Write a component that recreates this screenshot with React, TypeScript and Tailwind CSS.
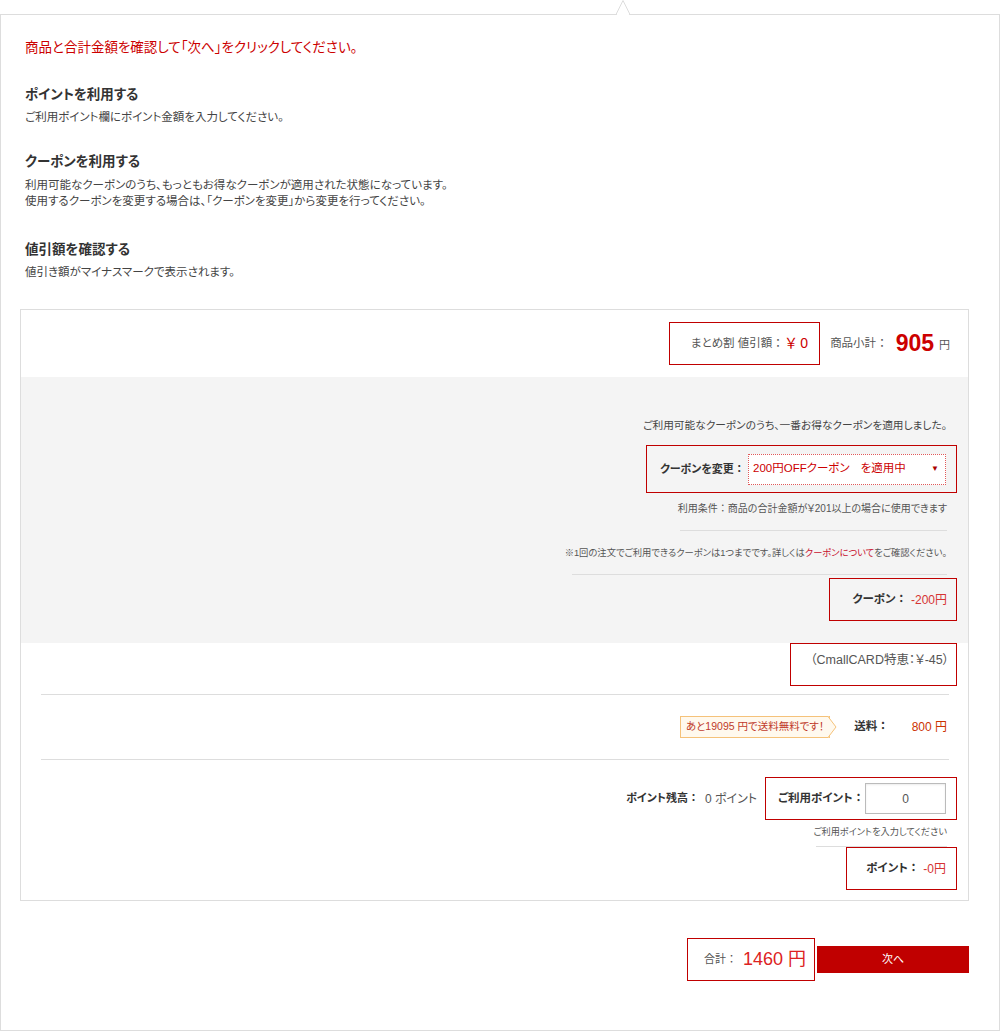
import React from "react";

// full-width colon without proportional spacing
const C = () => <span className="[font-feature-settings:normal]">：</span>;

const App = () => {
  return (
    <div className="relative w-[1000px] pt-[14px] text-[#333] [font-family:'Liberation_Sans','Noto_Sans_CJK_JP',sans-serif] [font-feature-settings:'palt']">
      {/* notch */}
      <svg
        className="absolute left-[615px] top-0 z-10"
        width="16"
        height="16"
        viewBox="0 0 16 16"
      >
        <polygon points="1.5,15.5 8,1.5 14.5,15.5" fill="#fff" />
        <polyline points="1,14.5 8,0.5 15,14.5" fill="none" stroke="#ddd" />
      </svg>

      <div className="h-[1017px] border border-[#ddd] pl-[19px]">
        {/* guide */}
        <div className="pl-[5px]">
          <p className="pt-[23px] text-[13.5px] leading-[20px] text-[#cc0000]">
            商品と合計金額を確認して「次へ」をクリックしてください。
          </p>
          <h3 className="mt-[27px] text-[13.5px] font-bold leading-[20px]">ポイントを利用する</h3>
          <p className="mt-[3px] text-[11.5px] leading-[18px] text-[#444]">
            ご利用ポイント欄にポイント金額を入力してください。
          </p>
          <h3 className="mt-[26px] text-[13.5px] font-bold leading-[20px]">クーポンを利用する</h3>
          <p className="mt-[5px] text-[11.5px] leading-[16px] text-[#444]">
            利用可能なクーポンのうち、もっともお得なクーポンが適用された状態になっています。
            <br />
            使用するクーポンを変更する場合は、「クーポンを変更」から変更を行ってください。
          </p>
          <h3 className="mt-[31px] text-[13.5px] font-bold leading-[20px]">値引額を確認する</h3>
          <p className="mt-[3px] text-[11.5px] leading-[18px] text-[#444]">
            値引き額がマイナスマークで表示されます。
          </p>
        </div>

        {/* summary panel */}
        <div className="mt-[28px] w-[949px] border border-[#ddd]">
          {/* subtotal */}
          <div className="flex h-[67px] items-center justify-end pr-[18px]">
            <div className="flex h-[43px] w-[151px] items-center justify-end border border-[#c00000] pr-[11px]">
              <span className="whitespace-nowrap text-[11.5px] text-[#555]">
                まとめ割 値引額<C />
              </span>
              <span className="ml-[2px] whitespace-nowrap text-[14px] text-[#cc0000]">￥ 0</span>
            </div>
            <span className="ml-[10px] text-[11.5px] text-[#555]">
              商品小計<C />
            </span>
            <span className="ml-[8px] text-[23px] font-bold leading-none text-[#cc0000]">905</span>
            <span className="ml-[5px] mt-[4px] text-[11px] text-[#555]">円</span>
          </div>

          {/* coupon */}
          <div className="flex flex-col items-end bg-[#f4f4f4] pb-[22px] pr-[11px] pt-[40px]">
            <p className="mr-[10px] text-[10.7px] leading-[16px] text-[#444]">
              ご利用可能なクーポンのうち、一番お得なクーポンを適用しました。
            </p>
            <div className="mt-[12px] flex h-[48px] w-[311px] items-center border border-[#c00000] pl-[13px]">
              <span className="whitespace-nowrap text-[11px] font-bold">
                クーポンを変更<C />
              </span>
              <div className="ml-auto mr-[10px] flex h-[31px] w-[198px] shrink-0 items-center border border-dotted border-[#e05a5a] bg-white pl-[4px] pr-[6px] text-[11.5px] text-[#cc0000]">
                <span className="whitespace-nowrap">200円OFFクーポン</span>
                <span className="ml-[11px] whitespace-nowrap">を適用中</span>
                <span className="ml-auto text-[8px] text-[#a00]">▼</span>
              </div>
            </div>
            <p className="mr-[10px] mt-[9px] text-[10px] leading-[14px] text-[#555]">
              利用条件<C />商品の合計金額が￥201以上の場合に使用できます
            </p>
            <div className="mr-[10px] mt-[14px] h-px w-[267px] bg-[#ddd]" />
            <p className="mr-[10px] mt-[15px] text-[9.3px] leading-[14px] text-[#555]">
              ※1回の注文でご利用できるクーポンは1つまでです。詳しくは
              <span className="text-[#c8102e]">クーポンについて</span>
              をご確認ください。
            </p>
            <div className="mr-[10px] mt-[14px] h-px w-[375px] bg-[#ddd]" />
            <div className="mt-[3px] flex h-[43px] w-[128px] items-center justify-end border border-[#c00000] pr-[9px]">
              <span className="text-[11.5px] font-bold">
                クーポン<C />
              </span>
              <span className="ml-[4px] text-[12px] text-[#d63333]">-200円</span>
            </div>
          </div>

          {/* card, shipping, points */}
          <div className="flex flex-col items-end pb-[10px] pr-[11px]">
            <div className="flex h-[43px] w-[167px] justify-end border border-[#c00000] pr-[7px] pt-[8px]">
              <span className="text-[12.5px] leading-[16px] text-[#555]">（CmallCARD特恵：￥-45）</span>
            </div>
            <div className="ml-[20px] mr-[8px] mt-[8px] h-px self-stretch bg-[#ddd]" />
            <div className="mr-[10px] flex h-[64px] items-center">
              <div className="relative flex h-[22px] items-center border border-[#f5c27a] bg-[#fff9ee] px-[5px] text-[10.5px] text-[#c0392b]">
                あと19095 円で送料無料です！
                <svg
                  className="absolute right-[-8px] top-[-1px]"
                  width="9"
                  height="22"
                  viewBox="0 0 9 22"
                >
                  <polygon points="0,0 8,11 0,22" fill="#fff9ee" />
                  <polyline points="0,0.5 8,11 0,21.5" fill="none" stroke="#f5c27a" />
                </svg>
              </div>
              <span className="ml-[24px] text-[11.5px] font-bold">
                送料<C />
              </span>
              <span className="ml-[23px] text-[12px] text-[#cc3300]">800 円</span>
            </div>
            <div className="ml-[20px] mr-[8px] h-px self-stretch bg-[#ddd]" />
            <div className="mt-[17px] flex items-center">
              <span className="text-[11px] font-bold">
                ポイント残高<C />
              </span>
              <span className="ml-[6px] text-[12px] text-[#555]">0 ポイント</span>
              <div className="ml-[8px] flex h-[43px] w-[192px] items-center border border-[#c00000] pl-[12px]">
                <span className="whitespace-nowrap text-[11.5px] font-bold">
                  ご利用ポイント<C />
                </span>
                <div className="ml-auto mr-[10px] flex h-[31px] w-[81px] shrink-0 items-center justify-center border border-[#bbb] bg-white text-[12px] text-[#555] shadow-[inset_0_1px_2px_rgba(0,0,0,0.08)]">
                  0
                </div>
              </div>
            </div>
            <p className="mr-[10px] mt-[5px] text-[9.2px] leading-[14px] text-[#555]">
              ご利用ポイントを入力してください
            </p>
            <div className="mr-[10px] mt-[7px] h-px w-[131px] bg-[#ddd]" />
            <div className="flex h-[43px] w-[111px] items-center justify-end border border-[#c00000] pr-[10px]">
              <span className="text-[11.5px] font-bold">
                ポイント<C />
              </span>
              <span className="ml-[4px] text-[12px] text-[#d63333]">-0円</span>
            </div>
          </div>
        </div>

        {/* total */}
        <div className="mt-[37px] flex w-[949px] items-center justify-end">
          <div className="flex h-[43px] w-[128px] items-center border border-[#c00000] pl-[16px]">
            <span className="text-[11px] text-[#555]">
              合計<C />
            </span>
            <span className="ml-[6px] text-[18px] text-[#d22]">1460 円</span>
          </div>
          <button className="ml-[2px] flex h-[27px] w-[152px] items-center justify-center bg-[#c00000] text-[11px] text-white">
            次へ
          </button>
        </div>
      </div>
    </div>
  );
};

export default App;
